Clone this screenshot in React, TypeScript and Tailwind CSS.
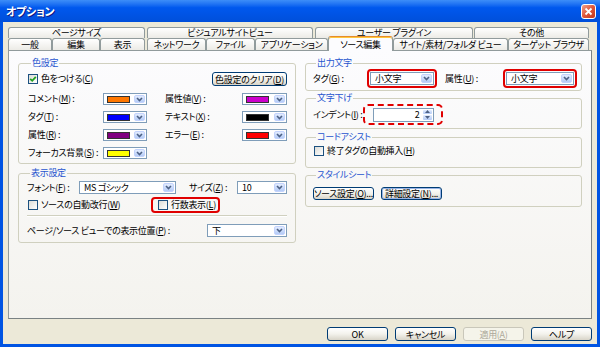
import type { ReactNode } from 'react';

const Chevron = () => (
  <svg width="7" height="5" viewBox="0 0 7 5">
    <path d="M1 1 L3.5 3.5 L6 1" stroke="#4D6185" strokeWidth="1.6" fill="none" />
  </svg>
);

function DropBtn() {
  return (
    <span className="flex h-full w-[11px] shrink-0 items-center justify-center rounded-[2px] border border-[#C3D3FD] bg-linear-to-b from-[#E3ECFE] to-[#B4CBF6]">
      <Chevron />
    </span>
  );
}

function ColorCombo({ swatch, w }: { swatch: string; w: string }) {
  return (
    <div className={`flex h-[12px] ${w} shrink-0 items-center border border-[#7F9DB9] bg-white p-px pl-[3px]`}>
      <span className={`h-[7px] w-[23px] border border-[#333] ${swatch}`} />
      <span className="ml-auto h-full">
        <DropBtn />
      </span>
    </div>
  );
}

function Combo({ w, text }: { w: string; text: string }) {
  return (
    <div className={`flex h-[13px] ${w} shrink-0 items-center border border-[#7F9DB9] bg-white p-px`}>
      <span className="flex-1 pl-[3px] leading-none">{text}</span>
      <DropBtn />
    </div>
  );
}

function Check({ checked }: { checked?: boolean }) {
  return (
    <span className="flex h-[10px] w-[10px] shrink-0 items-center justify-center border border-[#1C5180] bg-linear-to-br from-[#DCDCD7] to-white">
      {checked && (
        <svg width="8" height="8" viewBox="0 0 8 8">
          <path d="M1.2 3.8 L3.2 5.8 L6.8 1.8" stroke="#21A121" strokeWidth="1.8" fill="none" />
        </svg>
      )}
    </span>
  );
}

function Btn({
  children,
  w,
  h,
  focused,
  disabled,
}: {
  children: ReactNode;
  w: string;
  h: string;
  focused?: boolean;
  disabled?: boolean;
}) {
  const tone = disabled
    ? 'border-[#C9C7BA] text-[#ACA899] bg-[#F5F4EA]'
    : 'border-[#003C74] bg-linear-to-b from-white via-[#F3F2EC] to-[#D8D4C8]';
  return (
    <button
      className={`flex ${w} ${h} shrink-0 items-center justify-center rounded-[3px] border ${tone} ${
        focused ? 'shadow-[inset_0_0_0_1px_#98B4E6]' : ''
      } leading-none`}
    >
      {children}
    </button>
  );
}

function Group({ title, className, children }: { title: string; className: string; children: ReactNode }) {
  return (
    <fieldset className={`rounded-[3px] border border-[#D0D0BF] ${className}`}>
      <legend className="ml-[3px] px-px text-[9px] leading-[12px] text-[#1F55CF]">{title}</legend>
      {children}
    </fieldset>
  );
}

function Tab({ w, children, top }: { w: string; children: ReactNode; top?: boolean }) {
  return (
    <div
      className={`flex ${w} h-full shrink-0 items-center justify-center rounded-t-[3px] border border-b-0 border-[#919B9C] bg-linear-to-b from-white to-[#ECEBE6] leading-none ${
        top ? 'pb-[2px]' : ''
      }`}
    >
      {children}
    </div>
  );
}

export default function App() {
  return (
    <div className="flex h-[347px] w-[600px] flex-col overflow-hidden whitespace-nowrap bg-[#0054E3] font-['Noto_Sans_CJK_JP',sans-serif] text-[9px] tracking-[-0.3px] text-black [font-feature-settings:'palt']">
      {/* title bar */}
      <div className="flex h-[22px] shrink-0 items-center bg-linear-to-b from-[#3D8EF8] via-[#0058EE] via-35% to-[#004FDA] pl-[6px] pr-[4px]">
        <span className="text-[11px] font-bold text-white [text-shadow:1px_1px_0_#0A1883]">オプション</span>
        <button className="ml-auto flex h-[15px] w-[15px] items-center justify-center rounded-[3px] border border-white bg-linear-to-br from-[#F0A08A] via-[#E0563A] to-[#C2371B]">
          <svg width="9" height="9" viewBox="0 0 9 9">
            <path d="M1.5 1.5 L7.5 7.5 M7.5 1.5 L1.5 7.5" stroke="white" strokeWidth="1.8" />
          </svg>
        </button>
      </div>

      <div className="mx-[3px] mb-[3px] flex flex-1 flex-col bg-[#ECE9D8] px-[5px] pt-[5px]">
        {/* tabs */}
        <div className="flex h-[11px] shrink-0">
          <Tab w="w-[137px]" top>
            ページサイズ
          </Tab>
          <div className="w-[2px]" />
          <Tab w="w-[166px]" top>
            ビジュアルサイトビュー
          </Tab>
          <div className="w-[2px]" />
          <Tab w="w-[158px]" top>
            ユーザー プラグイン
          </Tab>
          <div className="w-px" />
          <Tab w="w-[115px]" top>
            その他
          </Tab>
        </div>
        <div className="flex h-[12px] shrink-0 items-end">
          <Tab w="w-[44px]">一般</Tab>
          <Tab w="w-[48px]">編集</Tab>
          <Tab w="w-[45px]">表示</Tab>
          <div className="w-[2px]" />
          <Tab w="w-[59px]">ネットワーク</Tab>
          <Tab w="w-[49px]">ファイル</Tab>
          <Tab w="w-[73px]">アプリケーション</Tab>
          <div className="relative z-10 -mb-px flex h-[15px] w-[65px] shrink-0 items-center justify-center rounded-t-[3px] border border-b-0 border-[#919B9C] border-t-[#E68B2C] bg-[#FCFCFE] leading-none shadow-[inset_0_1px_0_#FFC73C]">
            ソース編集
          </div>
          <Tab w="w-[115px]">サイト/素材/フォルダ ビュー</Tab>
          <Tab w="w-[81px]">ターゲット ブラウザ</Tab>
        </div>

        {/* panel */}
        <div className="flex h-[269px] shrink-0 gap-[9px] border border-[#919B9C] border-r-[#7A8283] border-b-[#7A8283] bg-linear-to-b from-[#FCFCFE] to-[#F4F3EE] px-[9px] pt-[6px]">
          {/* left column */}
          <div className="flex w-[278px] shrink-0 flex-col">
            <Group title="色設定" className="h-[107px] pl-[9px] pr-[8px]">
              <div className="mt-[3px] flex h-[14px] items-center">
                <Check checked />
                <span className="ml-[3px]">
                  色をつける(<u>C</u>)
                </span>
                <span className="ml-auto">
                  <Btn w="w-[75px]" h="h-[14px]">
                    色設定のクリア(<u>D</u>)
                  </Btn>
                </span>
              </div>
              <div className="mt-[7px] flex flex-col gap-[6px]">
                <div className="flex h-[12px] items-center">
                  <span className="w-[75px]">
                    コメント(<u>M</u>) :
                  </span>
                  <ColorCombo w="w-[44px]" swatch="bg-[#FF7700]" />
                  <span className="ml-[18px] w-[77px]">
                    属性値(<u>V</u>) :
                  </span>
                  <ColorCombo w="w-[45px]" swatch="bg-[#CC00CC]" />
                </div>
                <div className="flex h-[12px] items-center">
                  <span className="w-[75px]">
                    タグ(<u>T</u>) :
                  </span>
                  <ColorCombo w="w-[44px]" swatch="bg-[#0000FF]" />
                  <span className="ml-[18px] w-[77px]">
                    テキスト(<u>X</u>) :
                  </span>
                  <ColorCombo w="w-[45px]" swatch="bg-black" />
                </div>
                <div className="flex h-[12px] items-center">
                  <span className="w-[75px]">
                    属性(<u>R</u>) :
                  </span>
                  <ColorCombo w="w-[44px]" swatch="bg-[#800080]" />
                  <span className="ml-[18px] w-[77px]">
                    エラー(<u>E</u>) :
                  </span>
                  <ColorCombo w="w-[45px]" swatch="bg-[#FF0000]" />
                </div>
                <div className="flex h-[12px] items-center">
                  <span className="w-[75px]">
                    フォーカス背景(<u>S</u>) :
                  </span>
                  <ColorCombo w="w-[44px]" swatch="bg-[#FFFF00]" />
                </div>
              </div>
            </Group>

            <Group title="表示設定" className="mt-[3px] h-[76px] px-[8px]">
              <div className="mt-[2px] flex h-[13px] items-center">
                <span className="w-[52px]">
                  フォント(<u>F</u>) :
                </span>
                <Combo w="w-[97px]" text="MS ゴシック" />
                <span className="ml-[13px] w-[48px]">
                  サイズ(<u>Z</u>) :
                </span>
                <Combo w="w-[50px]" text="10" />
              </div>
              <div className="mt-[3px] flex h-[16px] items-center">
                <div className="flex w-[124px] items-center pl-px">
                  <Check />
                  <span className="ml-[3px]">
                    ソースの自動改行(<u>W</u>)
                  </span>
                </div>
                <div className="flex h-[16px] w-[69px] items-center rounded-[4px] border-2 border-[#E00000] pl-[5px]">
                  <Check />
                  <span className="ml-[3px]">
                    行数表示(<u>L</u>)
                  </span>
                </div>
              </div>
              <div className="mt-[2px] h-[2px] border-t border-b border-t-[#D0D0BF] border-b-white" />
              <div className="mt-[7px] flex h-[13px] items-center">
                <span className="flex-1">
                  ページ/ソース ビューでの表示位置(<u>P</u>) :
                </span>
                <Combo w="w-[80px]" text="下" />
              </div>
            </Group>
          </div>

          {/* right column */}
          <div className="flex w-[277px] shrink-0 flex-col">
            <Group title="出力文字" className="h-[34px] pl-[7px]">
              <div className="flex h-[19px] items-center">
                <span className="w-[54px]">
                  タグ(<u>G</u>) :
                </span>
                <div className="flex h-[19px] w-[70px] items-center rounded-[4px] border-2 border-[#E00000] px-px">
                  <Combo w="w-[64px]" text="小文字" />
                </div>
                <span className="ml-[8px] w-[58px]">
                  属性(<u>U</u>) :
                </span>
                <div className="flex h-[19px] w-[74px] items-center rounded-[4px] border-2 border-[#E00000] px-px">
                  <Combo w="w-[68px]" text="小文字" />
                </div>
              </div>
            </Group>

            <Group title="文字下げ" className="mt-px h-[37px] pl-[7px]">
              <div className="flex h-[21px] items-center">
                <span className="w-[50px]">
                  インデント(<u>I</u>) :
                </span>
                <div className="flex h-[21px] w-[80px] items-center justify-center rounded-[5px] border-2 border-dashed border-[#E00000]">
                  <div className="flex h-[14px] w-[61px] items-center border border-[#7F9DB9] bg-white p-px">
                    <span className="flex-1 pr-[3px] text-right leading-none">2</span>
                    <span className="flex h-full w-[9px] flex-col gap-px">
                      <span className="flex flex-1 items-center justify-center rounded-[1px] bg-linear-to-b from-[#E3ECFE] to-[#B4CBF6]">
                        <svg width="5" height="3" viewBox="0 0 5 3">
                          <path d="M0 3 L2.5 0 L5 3 Z" fill="#4D6185" />
                        </svg>
                      </span>
                      <span className="flex flex-1 items-center justify-center rounded-[1px] bg-linear-to-b from-[#E3ECFE] to-[#B4CBF6]">
                        <svg width="5" height="3" viewBox="0 0 5 3">
                          <path d="M0 0 L2.5 3 L5 0 Z" fill="#4D6185" />
                        </svg>
                      </span>
                    </span>
                  </div>
                </div>
              </div>
            </Group>

            <Group title="コードアシスト" className="mt-[2px] h-[37px] pl-[7px]">
              <div className="mt-[2px] flex h-[12px] items-center pl-px">
                <Check />
                <span className="ml-[3px]">
                  終了タグの自動挿入(<u>H</u>)
                </span>
              </div>
            </Group>

            <Group title="スタイルシート" className="mt-px h-[38px] pl-[7px]">
              <div className="mt-[6px] flex gap-[7px]">
                <Btn w="w-[61px]" h="h-[13px]">
                  ソース設定(<u>O</u>)...
                </Btn>
                <Btn w="w-[61px]" h="h-[13px]" focused>
                  詳細設定(<u>N</u>)...
                </Btn>
              </div>
            </Group>
          </div>
        </div>

        {/* dialog buttons */}
        <div className="mt-[8px] flex justify-end gap-[7px]">
          <Btn w="w-[61px]" h="h-[14px]">
            OK
          </Btn>
          <Btn w="w-[61px]" h="h-[14px]">
            キャンセル
          </Btn>
          <Btn w="w-[61px]" h="h-[14px]" disabled>
            適用(<u>A</u>)
          </Btn>
          <Btn w="w-[61px]" h="h-[14px]">
            ヘルプ
          </Btn>
        </div>
      </div>
    </div>
  );
}
